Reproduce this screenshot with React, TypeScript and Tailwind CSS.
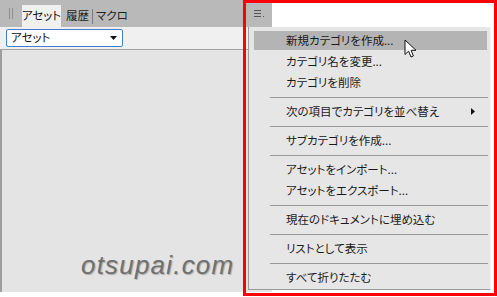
import React from 'react';

const jp = "font-['Noto_Sans_CJK_JP','Noto_Sans',sans-serif] [font-feature-settings:'palt'] whitespace-nowrap";

type Item = { label: string; sep?: boolean; arrow?: boolean; hot?: boolean };

const items: Item[] = [
  { label: '新規カテゴリを作成...', hot: true },
  { label: 'カテゴリ名を変更...' },
  { label: 'カテゴリを削除' },
  { label: '', sep: true },
  { label: '次の項目でカテゴリを並べ替え', arrow: true },
  { label: '', sep: true },
  { label: 'サブカテゴリを作成...' },
  { label: '', sep: true },
  { label: 'アセットをインポート...' },
  { label: 'アセットをエクスポート...' },
  { label: '', sep: true },
  { label: '現在のドキュメントに埋め込む' },
  { label: '', sep: true },
  { label: 'リストとして表示' },
  { label: '', sep: true },
  { label: 'すべて折りたたむ' },
];

function Cursor() {
  return (
    <svg width="14" height="20" viewBox="0 0 14 20" className="absolute left-[404px] top-[39px]">
      <path
        d="M1 1 L1 15.5 L4.6 12.2 L7 18 L9.4 17 L7.1 11.3 L12 11.3 Z"
        fill="#fff"
        stroke="#111"
        strokeWidth="1"
        strokeLinejoin="miter"
      />
    </svg>
  );
}

function Menu() {
  return (
    <div className={`absolute left-[248px] top-[27px] w-[243px] h-[263px] bg-[#e6e6e6] border-l border-b border-[#9c9c9c] border-r border-r-[#f7f7f7] pt-[3px] ${jp}`}>
      {items.map((it, i) =>
        it.sep ? (
          <div key={i} className="h-[8px] flex items-center pl-[21px] pr-[2px]">
            <div className="h-px w-full bg-[#9a9a9a]" />
          </div>
        ) : (
          <div key={i} className="h-[21px] py-px pl-[5px] pr-[3px]">
            <div
              className={`relative h-full flex items-center pl-[32px] text-[11.5px] leading-none text-[#1a1a1a] ${
                it.hot ? 'bg-[#b4b4b4]' : ''
              }`}
            >
              {it.label}
              {it.arrow && (
                <svg width="4" height="7" viewBox="0 0 4 7" className="absolute left-[217px] top-[6px]">
                  <path d="M0 0 L4 3.5 L0 7 Z" fill="#111" />
                </svg>
              )}
            </div>
          </div>
        )
      )}
    </div>
  );
}

function Panel() {
  return (
    <div className="w-[272px] h-[292px] flex flex-col">
      {/* tab bar */}
      <div className="h-[27px] bg-[#b9b9b9] flex items-end">
        <div className="w-[22px] h-full flex items-center justify-center gap-[2px]">
          <div className="w-px h-[11px] bg-[#8e8e8e]" />
          <div className="w-px h-[11px] bg-[#8e8e8e]" />
        </div>
        <div className={`h-[22px] w-[39px] bg-[#f0f0f0] flex items-center justify-center text-[11.5px] text-[#111] ${jp}`}>
          アセット
        </div>
        <div className={`h-[22px] flex items-center pl-[5px] text-[11.5px] text-[#222] ${jp}`}>
          履歴
          <div className="w-px h-[15px] bg-[#7a7a7a] ml-[3px] mr-[3px]" />
          マクロ
        </div>
        <div className="flex-1" />
        <div className="w-[26px] h-full flex items-center justify-center pl-[2px]">
          <svg width="12" height="10" viewBox="0 0 12 10">
            <rect x="0" y="1" width="7" height="1" fill="#555" />
            <rect x="0" y="4" width="7" height="1" fill="#555" />
            <rect x="0" y="7" width="7" height="1" fill="#555" />
            <rect x="9" y="7" width="1" height="1" fill="#555" />
          </svg>
        </div>
      </div>
      {/* toolbar */}
      <div className="h-[23px] bg-[#f0f0f0] flex items-center pl-[6px] border-b border-[#a3a3a3]">
        <div className={`w-[117px] h-[18px] bg-white border border-[#3f7fce] rounded-[2px] flex items-center pl-[4px] pr-[5px] text-[11.5px] text-[#111] ${jp}`}>
          <span className="flex-1">アセット</span>
          <svg width="7" height="4" viewBox="0 0 7 4">
            <path d="M0 0 L7 0 L3.5 4 Z" fill="#111" />
          </svg>
        </div>
      </div>
      {/* content */}
      <div className="flex-1 bg-[#e4e4e4] border-l-2 border-[#9e9e9e]" />
    </div>
  );
}

export default function App() {
  return (
    <div className="relative w-[497px] h-[297px] bg-white overflow-hidden">
      <Panel />
      <div className="absolute left-[81px] top-[252px] italic text-[26px] leading-none text-[#707070] font-['Liberation_Sans',sans-serif] tracking-[1.2px] [text-shadow:1px_1px_1px_rgba(0,0,0,0.25)]">
        otsupai.com
      </div>
      <Menu />
      <Cursor />
      <div className="absolute left-[243px] top-0 w-[254px] h-[296px] border-[3px] border-[#f00] pointer-events-none" />
    </div>
  );
}
